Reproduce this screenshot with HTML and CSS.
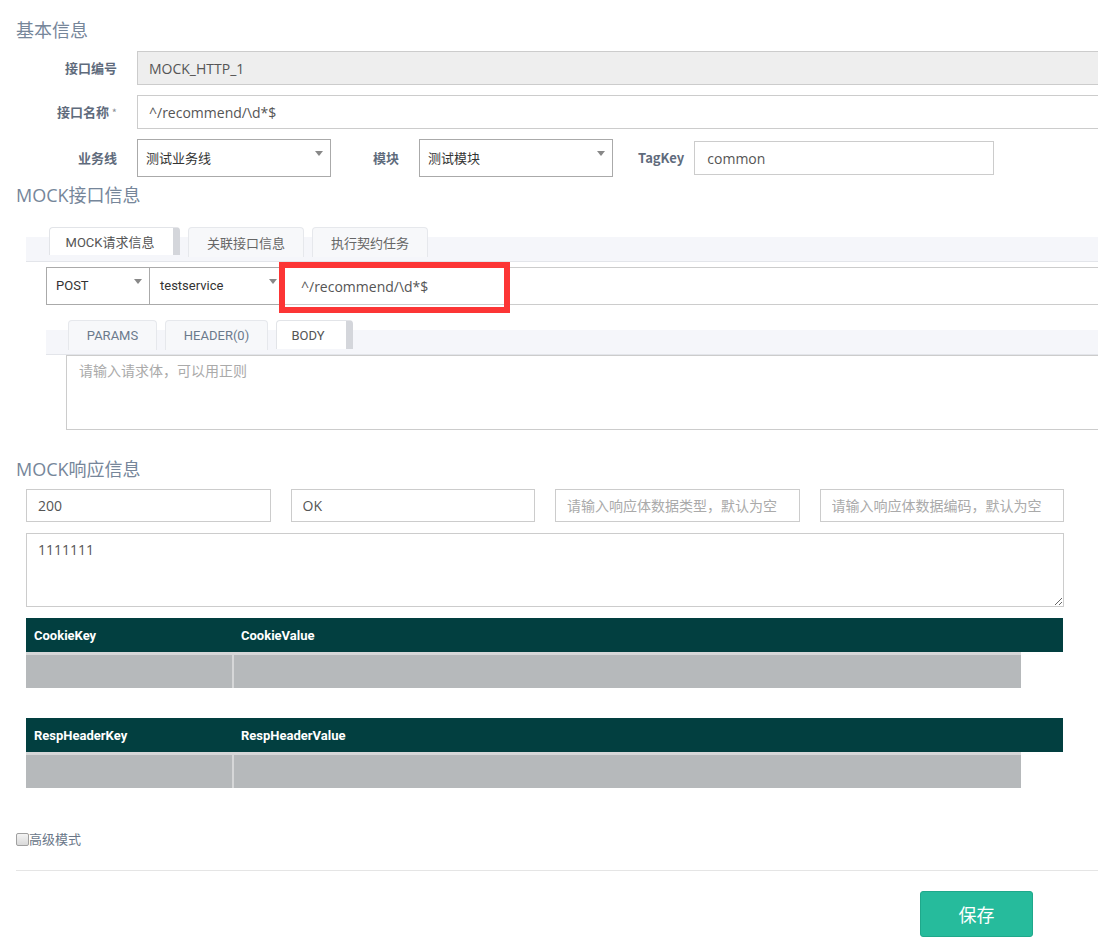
FILE: index.html
```html
<!DOCTYPE html>
<html lang="zh-CN">
<head>
<meta charset="utf-8">
<title>MOCK</title>
<link rel="stylesheet" href="styles.css">
</head>
<body>
<div class="page">
  <h2 class="sec-title sec-basic">基本信息</h2>

  <div class="form-row">
    <label class="lbl">接口编号</label>
    <input class="inp inp-wide inp-disabled" value="MOCK_HTTP_1" disabled>
  </div>
  <div class="form-row">
    <label class="lbl">接口名称 <span class="req">*</span></label>
    <input class="inp inp-wide" value="^/recommend/\d*$">
  </div>
  <div class="form-row form-row-last">
    <label class="lbl">业务线</label>
    <div class="sel sel-biz"><span>测试业务线</span></div>
    <label class="lbl-inline lbl-mod">模块</label>
    <div class="sel sel-mod"><span>测试模块</span></div>
    <label class="lbl-inline lbl-tag">TagKey</label>
    <input class="inp inp-tag" value="common">
  </div>

  <h2 class="sec-title sec-mock">MOCK接口信息</h2>

  <div class="tabs main-tabs">
    <div class="tab tab-active">MOCK请求信息</div>
    <div class="tab">关联接口信息</div>
    <div class="tab">执行契约任务</div>
  </div>

  <div class="req-row">
    <div class="sel sel-method"><span>POST</span></div>
    <div class="sel sel-service"><span>testservice</span></div>
    <input class="inp inp-url" value="^/recommend/\d*$">
    <div class="highlight"></div>
  </div>

  <div class="tabs sub-tabs">
    <div class="tab sub-tab">PARAMS</div>
    <div class="tab sub-tab">HEADER(0)</div>
    <div class="tab sub-tab tab-active">BODY</div>
  </div>
  <textarea class="req-body" placeholder="请输入请求体，可以用正则"></textarea>

  <h2 class="sec-title sec-resp">MOCK响应信息</h2>

  <div class="resp-grid">
    <input class="inp inp-resp" value="200">
    <input class="inp inp-resp" value="OK">
    <input class="inp inp-resp" placeholder="请输入响应体数据类型，默认为空">
    <input class="inp inp-resp" placeholder="请输入响应体数据编码，默认为空">
  </div>
  <textarea class="resp-body">1111111</textarea>

  <div class="kv-table kv-cookie">
    <div class="kv-head">
      <div class="kv-key">CookieKey</div>
      <div class="kv-val">CookieValue</div>
    </div>
    <div class="kv-body">
      <div class="kv-cell kv-cell-key"></div>
      <div class="kv-cell kv-cell-val"></div>
    </div>
  </div>

  <div class="kv-table kv-header">
    <div class="kv-head">
      <div class="kv-key">RespHeaderKey</div>
      <div class="kv-val">RespHeaderValue</div>
    </div>
    <div class="kv-body">
      <div class="kv-cell kv-cell-key"></div>
      <div class="kv-cell kv-cell-val"></div>
    </div>
  </div>

  <label class="adv"><input type="checkbox" class="adv-check"><span>高级模式</span></label>

  <div class="divider"></div>

  <div class="footer">
    <button class="btn-save" type="button">保存</button>
  </div>
</div>
</body>
</html>
```

FILE: styles.css
```css
html, body {
  margin: 0;
  padding: 0;
  overflow: hidden;
  background: #ffffff;
}

body {
  width: 1098px;
  height: 941px;
  font-family: "Open Sans", "Noto Sans CJK SC", sans-serif;
  font-size: 14px;
  color: #555555;
}

.page {
  box-sizing: border-box;
  width: 1098px;
  padding-left: 16px;
  display: flex;
  flex-direction: column;
  align-items: flex-start;
  overflow: hidden;
}

/* section titles */
.sec-title {
  margin: 0;
  font-family: "Open Sans", "Noto Sans CJK SC", sans-serif;
  font-size: 18px;
  font-weight: normal;
  line-height: 24px;
  color: #76869a;
}
.sec-basic { margin-top: 18px; margin-bottom: 9px; }
.sec-mock { margin-top: 6px; margin-bottom: 20px; }
.sec-resp { margin-top: 27px; margin-bottom: 8px; }

/* basic form */
.form-row {
  align-self: stretch;
  display: flex;
  align-items: center;
  margin-bottom: 10px;
}
.form-row-last { margin-bottom: 0; }

.lbl {
  width: 101px;
  margin-right: 20px;
  padding-bottom: 2px;
  text-align: right;
  font-family: "Noto Sans CJK SC", sans-serif;
  font-size: 13px;
  font-weight: bold;
  color: #5f6b7c;
  white-space: nowrap;
}
.lbl-inline {
  padding-bottom: 2px;
  font-family: "Noto Sans CJK SC", sans-serif;
  font-size: 13px;
  font-weight: bold;
  color: #5f6b7c;
  white-space: nowrap;
}
.lbl-mod { margin-left: 42px; margin-right: 20px; }
.lbl-tag { margin-left: 25px; margin-right: 10px; }
.req {
  font-size: 11px;
  font-weight: normal;
  color: #8a8f98;
}

.inp {
  box-sizing: border-box;
  height: 34px;
  margin: 0;
  padding: 0 11px;
  border: 1px solid #cccccc;
  border-radius: 0;
  background: #ffffff;
  font-family: "Open Sans", "Noto Sans CJK SC", sans-serif;
  font-size: 14px;
  color: #555555;
  outline: none;
}
.inp::placeholder { color: #aaaaaa; }
.inp-wide {
  flex: 1;
  min-width: 0;
  border-right: none;
}
.inp-disabled { background: #eeeeee; color: #555555; }
.inp-tag { width: 300px; padding-left: 12px; }

/* fake selects */
.sel {
  position: relative;
  box-sizing: border-box;
  height: 38px;
  display: flex;
  align-items: center;
  padding-left: 8px;
  padding-bottom: 2px;
  border: 1px solid #aaaaaa;
  background: #ffffff;
  font-family: "Roboto", "Noto Sans CJK SC", sans-serif;
  font-size: 13px;
  color: #333333;
  white-space: nowrap;
}
.sel::after {
  content: "";
  position: absolute;
  right: 7px;
  top: 11px;
  width: 0;
  height: 0;
  border-left: 4px solid transparent;
  border-right: 4px solid transparent;
  border-top: 5px solid #888888;
}
.sel-biz { width: 194px; }
.sel-mod { width: 194px; }

/* tabs */
.tabs {
  align-self: stretch;
  display: flex;
  align-items: flex-start;
  gap: 8px;
  box-sizing: border-box;
  background: linear-gradient(to bottom, transparent 10px, #f5f6fa 10px);
  border-bottom: 1px solid #e3e5ea;
}
.main-tabs {
  height: 35px;
  margin-left: 10px;
  padding-left: 23px;
}
.tab {
  box-sizing: border-box;
  height: 30px;
  padding: 0 18px;
  display: flex;
  align-items: center;
  justify-content: center;
  border: 1px solid #e6e8ec;
  border-bottom: none;
  border-radius: 4px 4px 0 0;
  background: #f7f8fa;
  font-family: "Roboto", "Noto Sans CJK SC", sans-serif;
  font-size: 13px;
  color: #666666;
  white-space: nowrap;
}
.main-tabs .tab { width: 116px; padding: 0; }
.main-tabs .tab-active { width: 131px; padding: 0 7px 0 4px; }
.tab-active {
  height: 28px;
  background: #ffffff;
  color: #555555;
  border-color: #e2e4e8;
  border-right: 7px solid #d4d6db;
}

.req-row {
  align-self: stretch;
  position: relative;
  display: flex;
  margin-top: 5px;
  margin-left: 30px;
}
.sel-method { width: 104px; padding-left: 9px; }
.sel-service { width: 136px; margin-left: -1px; padding-left: 10px; }
.inp-url {
  flex: 1;
  min-width: 0;
  height: 38px;
  margin-left: -1px;
  padding-left: 16px;
  border-right: none;
}
.highlight {
  position: absolute;
  left: 233px;
  top: -5px;
  width: 231px;
  height: 51px;
  box-sizing: border-box;
  border: 6px solid #fc3535;
  pointer-events: none;
}

.sub-tabs {
  height: 35px;
  margin-top: 15px;
  margin-left: 30px;
  padding-left: 22px;
}
.sub-tab {
  height: 30px;
  color: #6b7a8c;
}
.sub-tab:nth-child(1) { width: 89px; padding: 0; }
.sub-tab:nth-child(2) { width: 103px; padding: 0; }
.sub-tabs .tab-active {
  width: 77px;
  height: 29px;
  padding: 0 7px 0 0;
  color: #555555;
}

.req-body {
  align-self: stretch;
  box-sizing: border-box;
  height: 75px;
  margin: 0 0 0 50px;
  padding: 4px 12px;
  border: 1px solid #cccccc;
  border-right: none;
  resize: none;
  font-family: "Noto Sans CJK SC", sans-serif;
  font-size: 14px;
  line-height: 20px;
  outline: none;
}
.req-body::placeholder { color: #aaaaaa; }

/* response */
.resp-grid {
  display: grid;
  grid-template-columns: repeat(4, 1fr);
  column-gap: 20px;
  width: 1038px;
  margin-left: 10px;
}
.inp-resp {
  width: 100%;
  height: 33px;
  padding-left: 11px;
}

.resp-body {
  box-sizing: border-box;
  width: 1038px;
  height: 74px;
  margin: 11px 0 0 10px;
  padding: 6px 11px;
  border: 1px solid #cccccc;
  font-family: "Open Sans", "Noto Sans CJK SC", sans-serif;
  font-size: 14px;
  line-height: 20px;
  color: #555555;
  outline: none;
}

.kv-table {
  width: 1037px;
  margin-left: 10px;
}
.kv-cookie { margin-top: 11px; }
.kv-header { margin-top: 30px; }
.kv-head {
  display: flex;
  align-items: center;
  height: 34px;
  background: #023f40;
  font-family: "Roboto", sans-serif;
  font-size: 13px;
  font-weight: bold;
  color: #ffffff;
}
.kv-key { width: 208px; padding-left: 8px; box-sizing: border-box; }
.kv-val { padding-left: 7px; }
.kv-body {
  display: flex;
  gap: 2px;
  width: 995px;
  height: 36px;
  box-sizing: border-box;
  border-top: 3px solid #d6d7d8;
  background: #d6d7d8;
}
.kv-cell { height: 33px; background: #b6b9bb; }
.kv-cell-key { width: 206px; }
.kv-cell-val { flex: 1; }

/* advanced */
.adv {
  display: flex;
  align-items: center;
  margin-top: 44px;
  font-family: "Noto Sans CJK SC", sans-serif;
  font-size: 13px;
  line-height: 14px;
  color: #6a7789;
}
.adv-check {
  appearance: none;
  -webkit-appearance: none;
  box-sizing: border-box;
  width: 13px;
  height: 13px;
  margin: 0;
  border: 1px solid #a0a0a0;
  border-radius: 2px;
  background: linear-gradient(to bottom, #f4f4f4, #d9d9d9);
}

.divider {
  align-self: stretch;
  height: 1px;
  margin-top: 24px;
  background: #e5e5e5;
}

.footer {
  display: flex;
  justify-content: flex-end;
  width: 1017px;
  margin-top: 20px;
}
.btn-save {
  box-sizing: border-box;
  width: 113px;
  height: 46px;
  border: 1px solid #1fa88b;
  border-radius: 3px;
  background: #26bb9c;
  font-family: "Noto Sans CJK SC", sans-serif;
  font-size: 18px;
  color: #ffffff;
  cursor: pointer;
}
```
